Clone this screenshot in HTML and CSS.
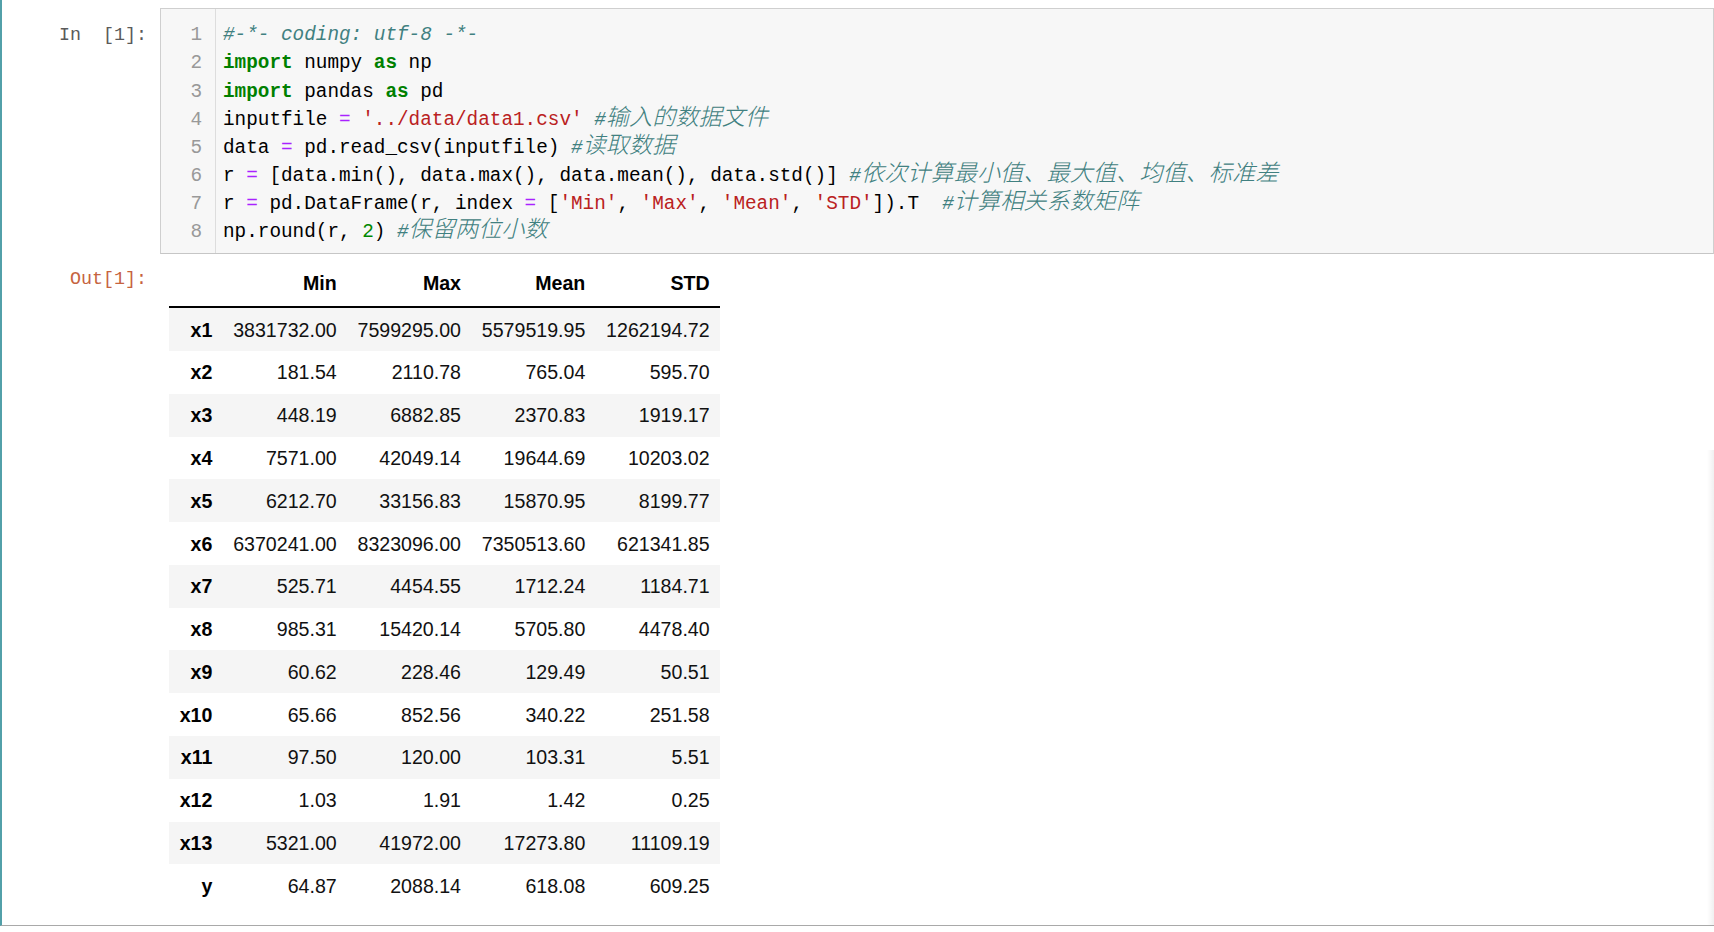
FILE: index.html
```html
<!DOCTYPE html>
<html lang="zh-CN">
<head>
<meta charset="utf-8">
<title>Notebook</title>
<link rel="stylesheet" href="styles.css">
</head>
<body>
<div class="cell">
  <div class="input">
    <div class="prompt in-prompt">In  [1]:</div>
    <div class="code">
      <div class="gutter">
        <div class="line">1</div><div class="line">2</div><div class="line">3</div><div class="line">4</div><div class="line">5</div><div class="line">6</div><div class="line">7</div><div class="line">8</div>
      </div>
      <div class="lines">
        <div class="line"><span class="c">#-*- coding: utf-8 -*-</span></div>
        <div class="line"><span class="k">import</span> numpy <span class="k">as</span> np</div>
        <div class="line"><span class="k">import</span> pandas <span class="k">as</span> pd</div>
        <div class="line">inputfile <span class="o">=</span> <span class="s">'../data/data1.csv'</span> <span class="c">#<span class="z">输入的数据文件</span></span></div>
        <div class="line">data <span class="o">=</span> pd.read_csv(inputfile) <span class="c">#<span class="z">读取数据</span></span></div>
        <div class="line">r <span class="o">=</span> [data.min(), data.max(), data.mean(), data.std()] <span class="c">#<span class="z">依次计算最小值、最大值、均值、标准差</span></span></div>
        <div class="line">r <span class="o">=</span> pd.DataFrame(r, index <span class="o">=</span> [<span class="s">'Min'</span>, <span class="s">'Max'</span>, <span class="s">'Mean'</span>, <span class="s">'STD'</span>]).T  <span class="c">#<span class="z">计算相关系数矩阵</span></span></div>
        <div class="line">np.round(r, <span class="n">2</span>) <span class="c">#<span class="z">保留两位小数</span></span></div>
      </div>
    </div>
  </div>
  <div class="output">
    <div class="prompt out-prompt">Out[1]:</div>
    <div class="output-area">
      <table class="frame">
        <thead>
          <tr><th></th><th>Min</th><th>Max</th><th>Mean</th><th>STD</th></tr>
        </thead>
        <tbody>
          <tr><th>x1</th><td>3831732.00</td><td>7599295.00</td><td>5579519.95</td><td>1262194.72</td></tr>
          <tr><th>x2</th><td>181.54</td><td>2110.78</td><td>765.04</td><td>595.70</td></tr>
          <tr><th>x3</th><td>448.19</td><td>6882.85</td><td>2370.83</td><td>1919.17</td></tr>
          <tr><th>x4</th><td>7571.00</td><td>42049.14</td><td>19644.69</td><td>10203.02</td></tr>
          <tr><th>x5</th><td>6212.70</td><td>33156.83</td><td>15870.95</td><td>8199.77</td></tr>
          <tr><th>x6</th><td>6370241.00</td><td>8323096.00</td><td>7350513.60</td><td>621341.85</td></tr>
          <tr><th>x7</th><td>525.71</td><td>4454.55</td><td>1712.24</td><td>1184.71</td></tr>
          <tr><th>x8</th><td>985.31</td><td>15420.14</td><td>5705.80</td><td>4478.40</td></tr>
          <tr><th>x9</th><td>60.62</td><td>228.46</td><td>129.49</td><td>50.51</td></tr>
          <tr><th>x10</th><td>65.66</td><td>852.56</td><td>340.22</td><td>251.58</td></tr>
          <tr><th>x11</th><td>97.50</td><td>120.00</td><td>103.31</td><td>5.51</td></tr>
          <tr><th>x12</th><td>1.03</td><td>1.91</td><td>1.42</td><td>0.25</td></tr>
          <tr><th>x13</th><td>5321.00</td><td>41972.00</td><td>17273.80</td><td>11109.19</td></tr>
          <tr><th>y</th><td>64.87</td><td>2088.14</td><td>618.08</td><td>609.25</td></tr>
        </tbody>
      </table>
    </div>
  </div>
  <div class="edge-shade"></div>
</div>
</body>
</html>
```
FILE: styles.css
```css
html, body {
  margin: 0;
  padding: 0;
  background: #ffffff;
}

.cell {
  position: relative;
  width: 1714px;
  box-sizing: border-box;
  border-left: 2px solid #52a0a9;
  border-bottom: 1px solid #a9a9a9;
  padding-top: 8px;
  padding-bottom: 17.5px;
}

.input,
.output {
  display: flex;
  align-items: flex-start;
}

.prompt {
  flex: none;
  width: 158px;
  box-sizing: border-box;
  padding-right: 13px;
  text-align: right;
  font-family: "Liberation Mono", "DejaVu Sans Mono", monospace;
  font-size: 18.33px;
  line-height: 28px;
  white-space: pre;
}

.in-prompt {
  color: #5a5a5a;
  padding-top: 14px;
}

.out-prompt {
  color: #c6633f;
  padding-top: 12.2px;
}

.code {
  flex: 1;
  display: flex;
  background: #f7f7f7;
  border: 1px solid #cfcfcf;
  border-bottom-color: #c6c6c6;
  font-family: "Liberation Mono", "DejaVu Sans Mono", monospace;
  font-size: 19.33px;
  color: #000;
}

.gutter {
  flex: none;
  width: 55px;
  box-sizing: border-box;
  padding: 12.4px 13px 6.6px 0;
  border-right: 1px solid #dddddd;
  text-align: right;
  color: #999999;
}

.lines {
  flex: 1;
  padding: 12.4px 0 6.6px 7px;
}

.line {
  height: 28.1px;
  line-height: 28.1px;
  white-space: pre;
}

.k {
  color: #008000;
  font-weight: bold;
}

.o {
  color: #aa22ff;
}

.s {
  color: #ba2121;
}

.n {
  color: #008800;
}

.c {
  color: #408080;
  font-style: italic;
}

.z {
  font-family: "Noto Sans CJK SC", "Noto Sans CJK JP", sans-serif;
  font-size: 23.2px;
  line-height: 0;
  font-weight: 300;
}

.output-area {
  padding-left: 9.3px;
  padding-top: 9px;
}

.frame {
  border-collapse: collapse;
  font-family: "Liberation Sans", Arial, sans-serif;
  font-size: 19.6px;
  color: #111;
}

.frame th,
.frame td {
  padding: 10.4px;
  line-height: 22px;
  text-align: right;
  vertical-align: middle;
  white-space: nowrap;
}

.frame thead th {
  padding-top: 9px;
  padding-bottom: 12.5px;
  border-bottom: 2px solid #000;
  font-weight: bold;
  color: #000;
}

.frame tbody th {
  font-weight: bold;
  color: #000;
}

.frame tbody tr:nth-child(odd) {
  background: #f5f5f5;
}

.edge-shade {
  position: absolute;
  right: 0;
  top: 450px;
  bottom: 0;
  width: 7px;
  background: linear-gradient(to right, rgba(0, 0, 0, 0), rgba(0, 0, 0, 0.06));
}
```
